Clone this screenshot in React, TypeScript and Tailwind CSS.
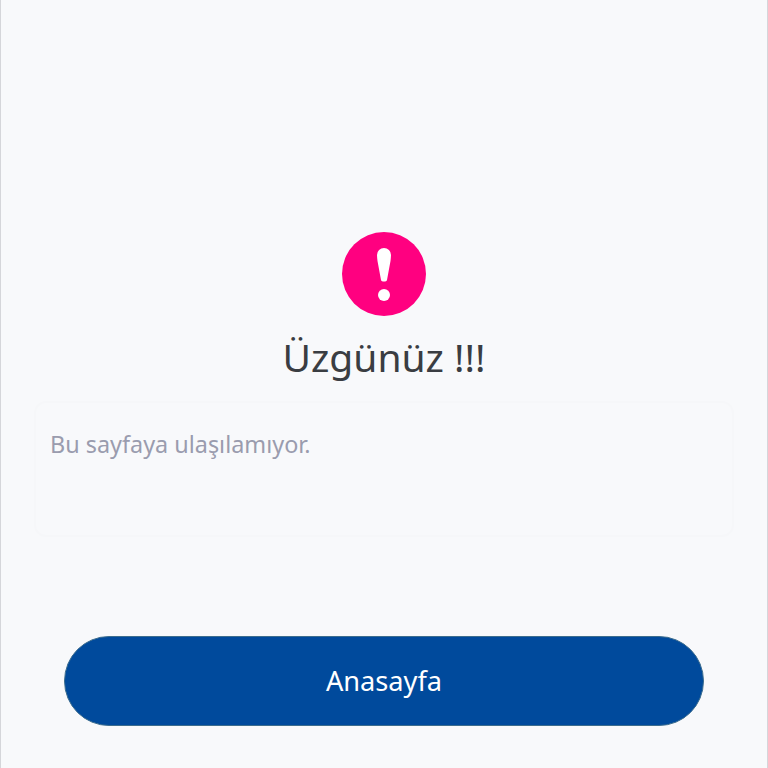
export default function App() {
  return (
    <div className="min-h-[768px] h-[768px] bg-[#f8f9fb] border-x border-[#d5d6da] flex flex-col items-center pt-[232px] font-['Noto_Sans',sans-serif]">
      <div className="w-[84px] h-[84px] rounded-full bg-[#ff0080] flex items-center justify-center">
        <svg width="16" height="55" viewBox="0 0 16 55" fill="white">
          <path d="M1 8a7 7 0 0 1 14 0c0 2-.3 4-.5 6L11 33c-.4 2-5.600 2-6 0L1.500 14C1.300 12 1 10 1 8z" />
          <circle cx="8" cy="48" r="6" />
        </svg>
      </div>
      <h1 className="mt-[15px] text-[39px] leading-[52px] text-[#3a3d42]">Üzgünüz !!!</h1>
      <div className="mt-[18px] w-[700px] h-[136px] rounded-[12px] border-2 border-[#f6f7f9] px-[14px] py-[23px]">
        <p className="text-[23.4px] leading-[36px] text-[#9a9cae]">Bu sayfaya ulaşılamıyor.</p>
      </div>
      <button className="mt-[99px] w-[640px] h-[90px] rounded-[45px] bg-[#004a9c] border border-[#3c6d8e] text-white text-[27.200px]">
        Anasayfa
      </button>
    </div>
  );
}
